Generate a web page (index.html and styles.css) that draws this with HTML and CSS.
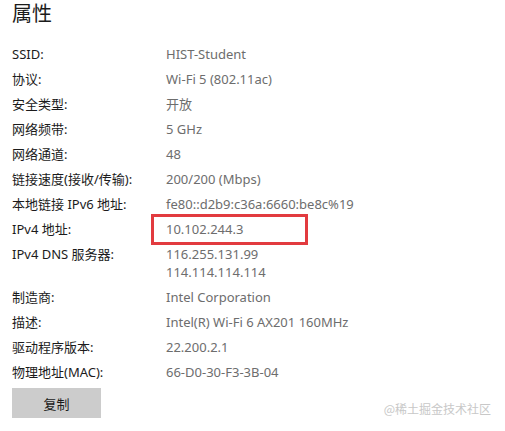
FILE: index.html
```html
<!DOCTYPE html>
<html lang="zh-CN">
<head>
<meta charset="utf-8">
<title>属性</title>
<link rel="stylesheet" href="styles.css">
</head>
<body>
<main class="panel">
  <h1 class="title">属性</h1>
  <dl class="props">
    <dt>SSID:</dt><dd>HIST-Student</dd>
    <dt>协议:</dt><dd>Wi-Fi 5 (802.11ac)</dd>
    <dt>安全类型:</dt><dd>开放</dd>
    <dt>网络频带:</dt><dd>5 GHz</dd>
    <dt>网络通道:</dt><dd>48</dd>
    <dt>链接速度(接收/传输):</dt><dd>200/200 (Mbps)</dd>
    <dt>本地链接 IPv6 地址:</dt><dd>fe80::d2b9:c36a:6660:be8c%19</dd>
    <dt>IPv4 地址:</dt><dd class="marked">10.102.244.3<span class="highlight"></span></dd>
    <dt>IPv4 DNS 服务器:</dt><dd>116.255.131.99<br>114.114.114.114</dd>
    <dt>制造商:</dt><dd>Intel Corporation</dd>
    <dt>描述:</dt><dd>Intel(R) Wi-Fi 6 AX201 160MHz</dd>
    <dt>驱动程序版本:</dt><dd>22.200.2.1</dd>
    <dt>物理地址(MAC):</dt><dd>66-D0-30-F3-3B-04</dd>
  </dl>
  <button class="copy" type="button">复制</button>
  <span class="watermark">@稀土掘金技术社区</span>
</main>
</body>
</html>
```
FILE: styles.css
```css
html, body {
  margin: 0;
  padding: 0;
  background: #ffffff;
}
body {
  font-family: "Noto Sans", "Noto Sans CJK SC", sans-serif;
  color: #1b1b1b;
  width: 505px;
  height: 431px;
  overflow: hidden;
}
.panel {
  position: relative;
  height: 431px;
  padding: 0 12px;
  box-sizing: border-box;
}
.title {
  margin: 0;
  padding-top: 1px;
  font-size: 20px;
  font-weight: 400;
  line-height: 26px;
  height: 44px;
}
.props {
  margin: 0;
  display: grid;
  grid-template-columns: 154px auto;
  row-gap: 7px;
  font-size: 13px;
  line-height: 18px;
}
.props dt {
  margin: 0;
  color: #1b1b1b;
}
.props dd {
  margin: 0;
  color: #6d6d6d;
}
.marked {
  position: relative;
}
.highlight {
  position: absolute;
  left: -15px;
  top: -6px;
  width: 157px;
  height: 31px;
  box-sizing: border-box;
  border: 3px solid #e23b3f;
}
.copy {
  margin-top: 7px;
  width: 89px;
  height: 30px;
  border: none;
  background: #cccccc;
  font-family: "Noto Sans CJK SC", sans-serif;
  font-size: 13px;
  color: #1b1b1b;
  padding: 0;
}
.watermark {
  position: absolute;
  right: 14px;
  bottom: 14px;
  font-size: 12px;
  color: #c8c8c8;
  font-family: "Noto Sans CJK SC", sans-serif;
}
```
